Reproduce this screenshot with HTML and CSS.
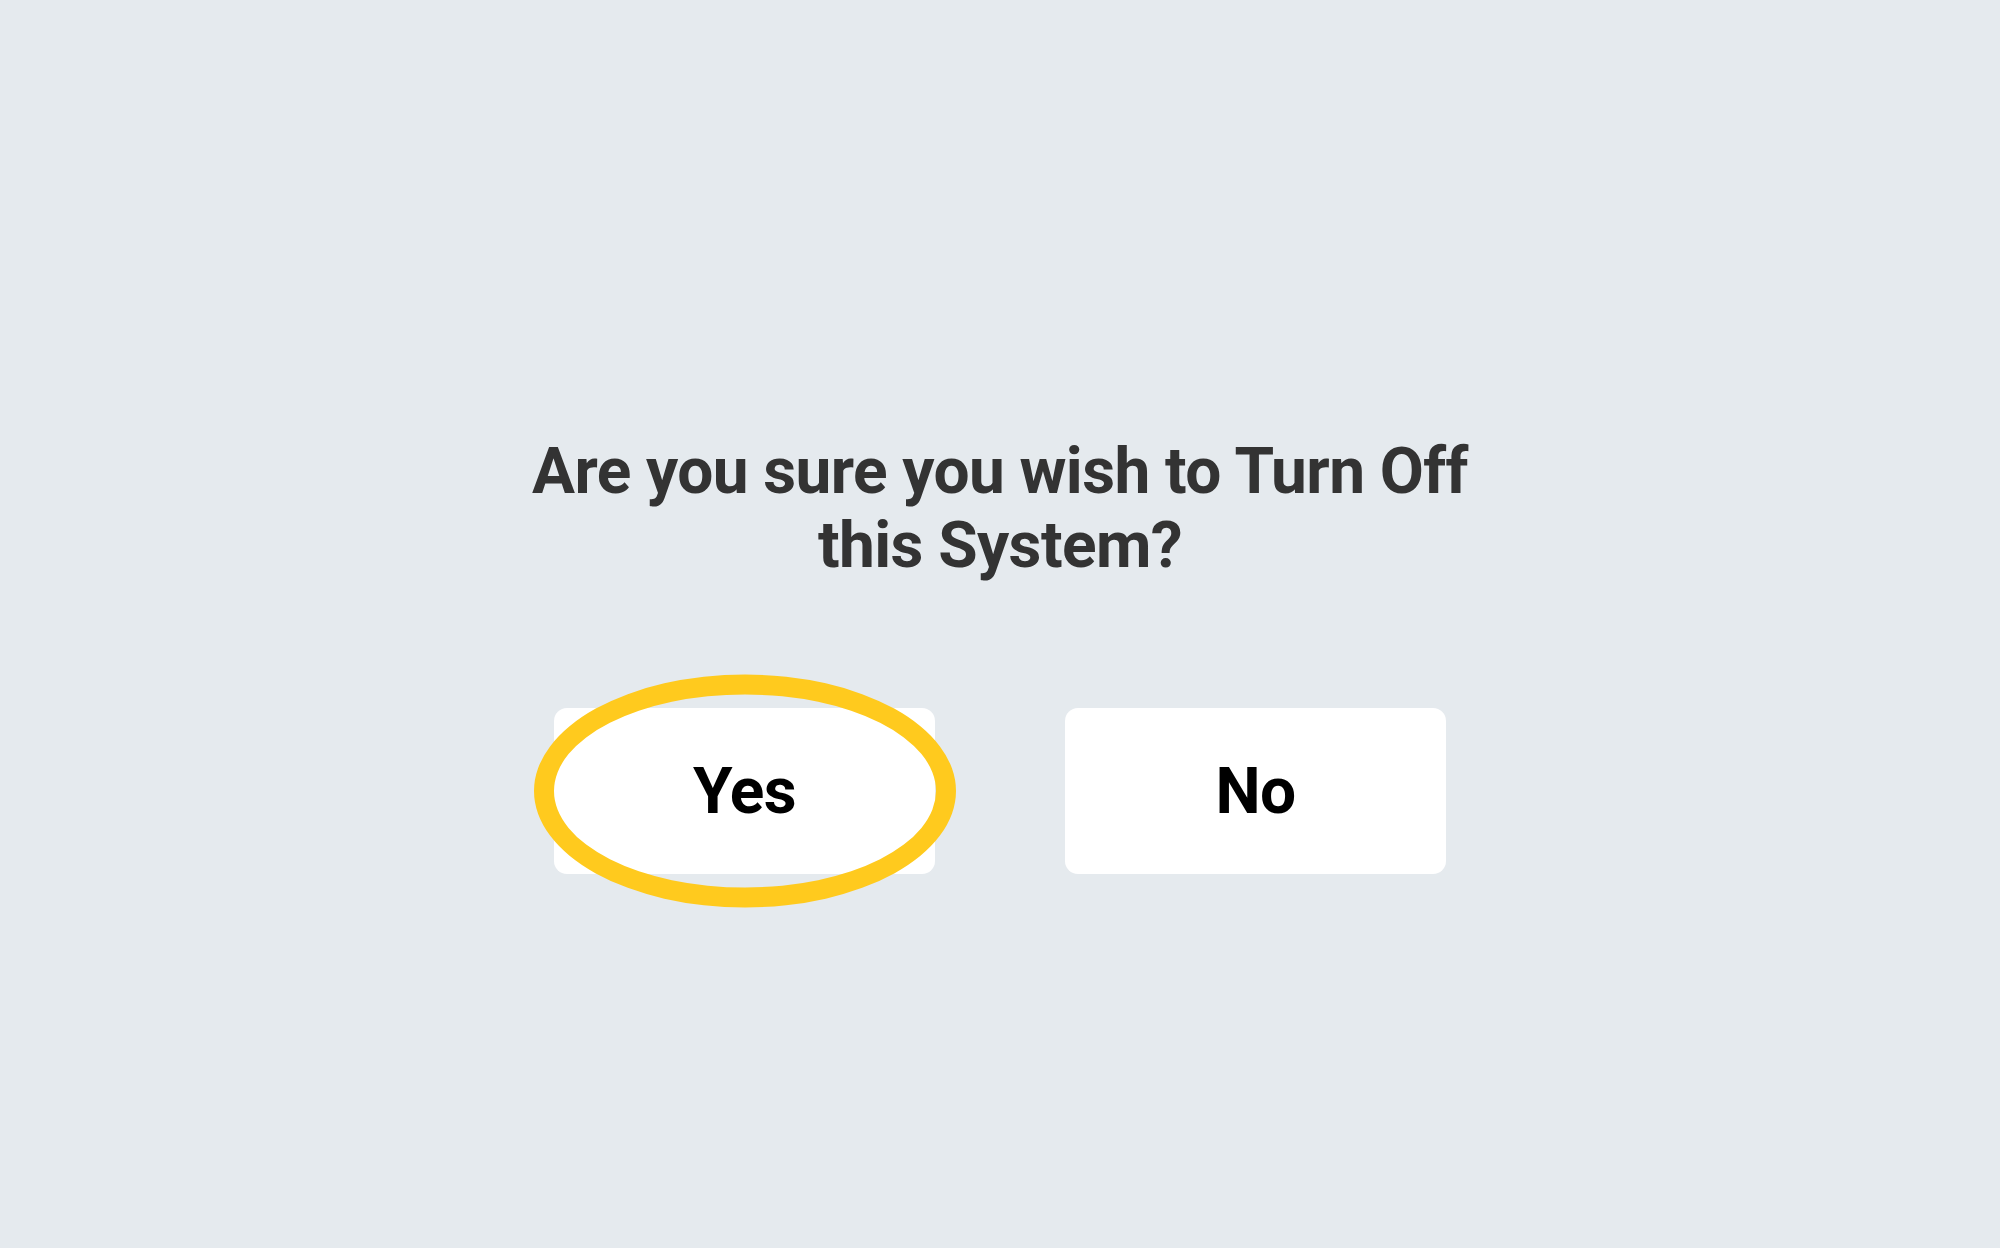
FILE: index.html
```html
<!DOCTYPE html>
<html lang="en">
<head>
<meta charset="utf-8">
<title>Turn Off System</title>
<link rel="stylesheet" href="styles.css">
</head>
<body>
<main class="dialog">
  <h1 class="question">Are you sure you wish to Turn Off<br>this System?</h1>
  <div class="actions">
    <button class="btn btn-yes">Yes<span class="highlight"></span></button>
    <button class="btn">No</button>
  </div>
</main>
</body>
</html>
```
FILE: styles.css
```css
html, body {
  margin: 0;
  padding: 0;
  width: 100%;
  height: 100%;
  background: #e5eaee;
}
body {
  font-family: Roboto, "Liberation Sans", Arial, sans-serif;
  overflow: hidden;
}
.dialog {
  display: flex;
  flex-direction: column;
  align-items: center;
  padding-top: 435px;
}
.question {
  margin: 0;
  font-size: 64px;
  font-weight: 700;
  line-height: 74px;
  letter-spacing: -0.6px;
  color: #333333;
  text-align: center;
}
.actions {
  display: flex;
  gap: 130px;
  margin-top: 125px;
}
.btn {
  position: relative;
  width: 381px;
  height: 166px;
  border: none;
  border-radius: 13px;
  background: #ffffff;
  font-family: Roboto, "Liberation Sans", Arial, sans-serif;
  font-size: 64px;
  font-weight: 700;
  letter-spacing: -0.6px;
  color: #000000;
  padding: 0;
  cursor: pointer;
}
.highlight {
  position: absolute;
  left: 50%;
  top: 50%;
  width: 422px;
  height: 233px;
  transform: translate(-50%, -50%);
  box-sizing: border-box;
  border: 20px solid #ffca1e;
  border-radius: 50%;
  pointer-events: none;
}
```
